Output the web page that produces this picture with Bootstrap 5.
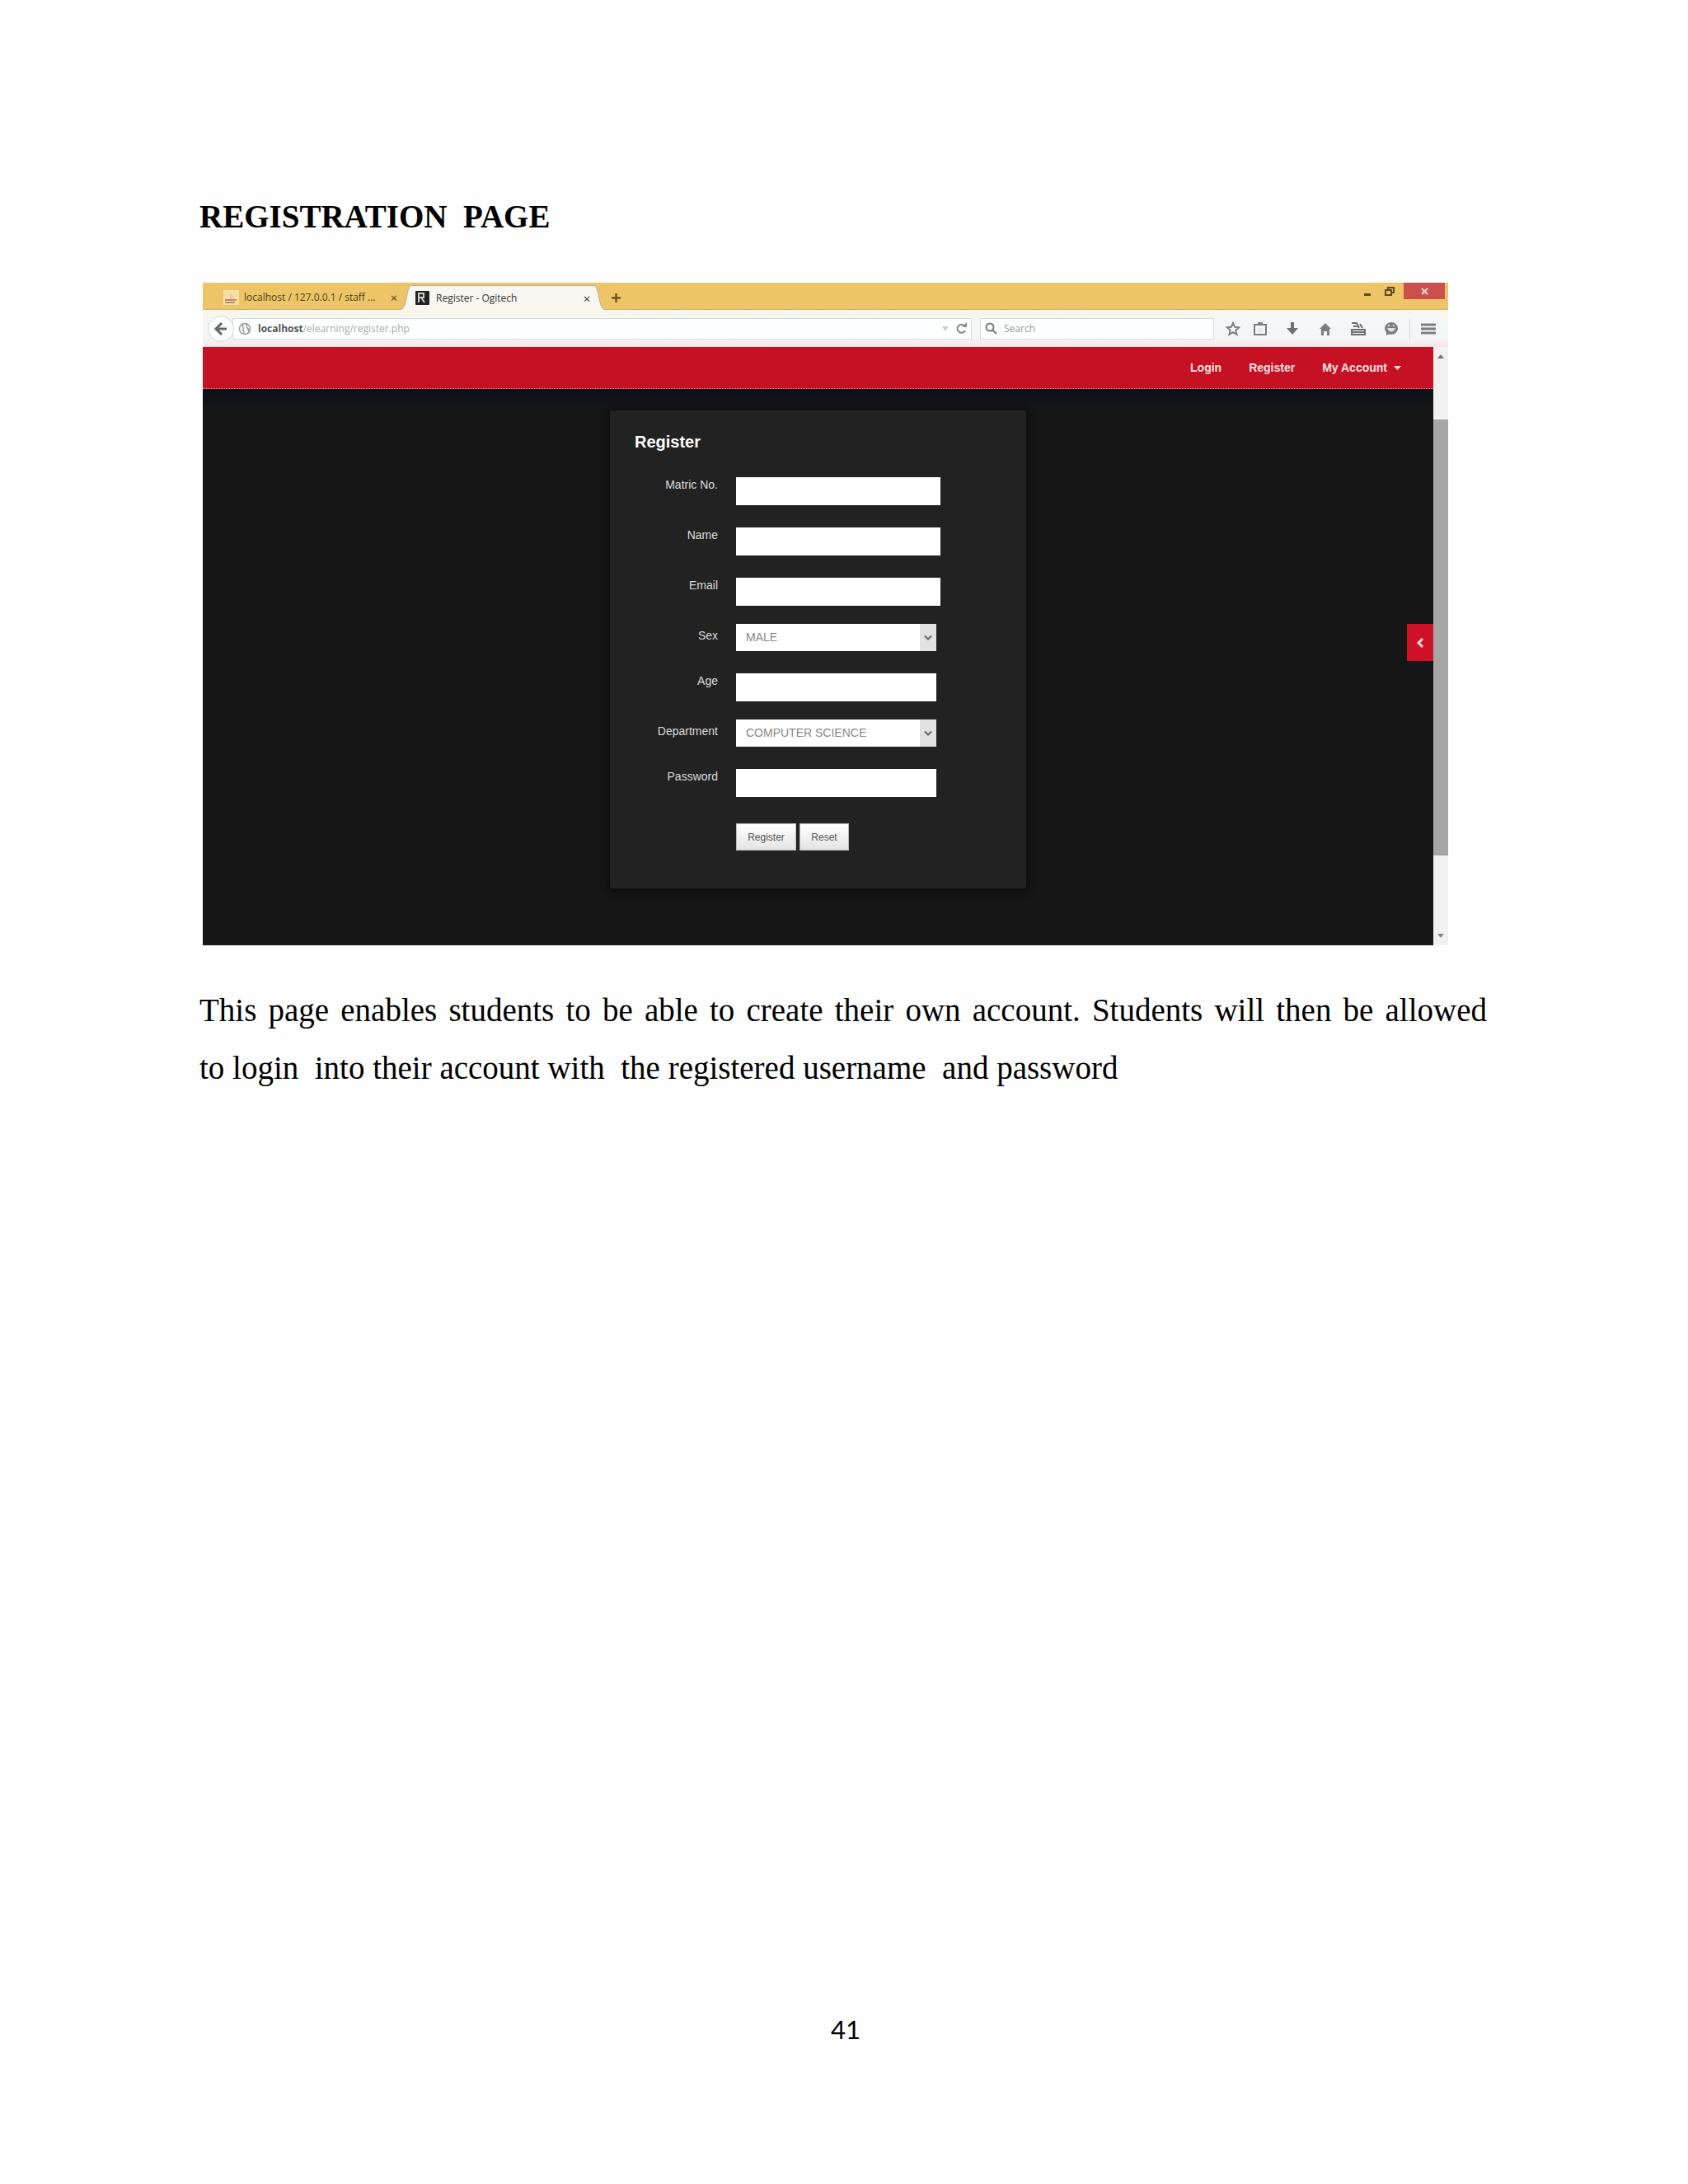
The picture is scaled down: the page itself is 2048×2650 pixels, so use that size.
<!DOCTYPE html>
<html lang="en">
<head>
<meta charset="utf-8">
<meta name="viewport" content="width=device-width, initial-scale=1">
<title>Registration Page</title>
<link rel="stylesheet" href="https://cdn.jsdelivr.net/npm/bootstrap@5.3.0/dist/css/bootstrap.min.css">
<style>
  body { background: #fefefe; color: #000; font-family: "Liberation Serif", serif; }
  .sheet { min-height: 100vh; padding: 228px 242px 164px; }
  .doc-title { font-size: 39px; line-height: 70px; margin: 0 0 45px; font-weight: 700; }
  .doc-text { font-size: 39px; line-height: 70px; margin: 44px 0 0; }
  .full-line { text-align: justify; text-align-last: justify; margin-right: 2px; }
  .page-no { font-family: Lato, sans-serif; font-size: 31px; line-height: 48px; padding-left: 4px; }
  .shot { margin: 0 49px 0 4px; font-family: "Liberation Sans", sans-serif; }

  /* browser chrome */
  .tabstrip { height: 33px; background: #edc566; border-bottom: 1px solid #c9b078; font-family: "Open Sans", sans-serif; font-size: 12px; line-height: 20px; color: #4b3d22; }
  .tab-idle { width: 240px; padding-left: 24px; }
  .tab-live { width: 248px; height: 30px; margin-bottom: -1px; }
  .tab-face { background: #f8f6f0; height: 30px; color: #333; border-top: 1px solid #b9ad8c; }
  .tab-x { border: 0; background: none; padding: 0; width: 16px; color: inherit; line-height: 20px; font-size: 15px; }
  .win-close { width: 50px; height: 20px; background: #c9504f; border: 0; padding: 0; color: #fff; }
  .win-btn { border: 0; background: none; padding: 0; height: 20px; width: 27px; }
  .toolbar { height: 45px; background: linear-gradient(#fbf5e4, #f4f7f7 25%, #f4f6f6 75%, #fbe3e8); padding: 0 14px 0 6px; font-family: "Open Sans", sans-serif; font-size: 12px; color: #555; }
  .back-btn { width: 32px; height: 32px; border: 1px solid #d3d9d6; background: #fbfdfc; padding: 0; z-index: 1; }
  .field-bar { height: 26px; background: #fdfefe; border: 1px solid #d5dcdf; }
  .address { margin-left: -2px; padding: 0 4px 0 6px; }
  .url { color: #aaa; }
  .url b { color: #555; }
  .finder { width: 284px; margin-left: 10px; padding-left: 5px; }
  .bare-input { border: 0; background: none; padding: 0; min-width: 0; font-size: 12px; color: #777; }
  .bare-input::placeholder { color: #999; opacity: 1; }
  .tool { border: 0; background: none; padding: 0; width: 20px; height: 20px; display: flex; }
  .tools-near { gap: 13px; margin: 0 19px 0 13px; }
  .tools-far { gap: 20px; }
  .tool-sep { width: 1px; height: 26px; background: #d4d8d8; margin: 0 12px; }

  /* site */
  .site { background: #161616; }
  .site-nav { height: 51px; background: #c61023; border-bottom: 1px dotted #e58f93; padding-right: 39px; gap: 33px; font-size: 14px; font-weight: 700; }
  .site-nav a { color: #fde3e3; text-decoration: none; }
  .stage { padding: 26px 0 69px; background: linear-gradient(#0b0f16, #161616 26px); }
  .panel { width: 505px; background: #222; padding: 23px 30px 46px; box-shadow: 0 2px 8px 2px #0c0c0c; border-radius: 3px; color: #ddd; }
  .panel-title { font-size: 20px; line-height: 30px; font-weight: 700; color: #fff; margin: 0 0 23px; }
  .line { display: flex; gap: 22px; margin-bottom: 22px; align-items: flex-start; }
  .line label { width: 101px; text-align: right; font-size: 14px; line-height: 20px; padding-top: 4px; }
  .box { height: 34px; width: 248px; margin-top: 5px; border: 0; border-radius: 0; background: #fff; }
  .box-short { width: 243px; }
  .pick { width: 243px; height: 33px; position: relative; }
  .pick select { appearance: none; background: #fff; width: 100%; height: 33px; border: 0; border-radius: 0; padding: 0 24px 0 12px; font-size: 14px; color: #888; }
  .pick svg { position: absolute; right: 0; top: 0; pointer-events: none; }
  .act { height: 33px; font-size: 12px; padding: 0; border: 1px solid #bbb; background: linear-gradient(#fff, #e4e4e4); color: #555; }
  .act-row { padding: 10px 0 0 123px; gap: 4px; }
  .act-a { width: 73px; }
  .act-b { width: 60px; }
  .drawer { right: 0; top: 336px; width: 32px; height: 45px; border: 0; background: #cf1029; padding: 0; }
  .scroller { width: 18px; background: #f1f1f1; padding: 8px 0; }
  .thumb { background: #a6a6a6; margin-top: 74px; flex: 0 0 529px; }
</style>
<script src="https://cdn.jsdelivr.net/npm/bootstrap@5.3.0/dist/js/bootstrap.bundle.min.js"></script>
</head>
<body>
<main class="sheet d-flex flex-column">
  <h1 class="doc-title">REGISTRATION&nbsp; PAGE</h1>

  <section class="shot" aria-label="Browser window">
    <div class="tabstrip d-flex align-items-end">
      <div class="tab-idle d-flex align-items-center pb-1">
        <svg width="22" height="20" viewBox="0 0 22 20"><rect x="1" y="1" width="19" height="18" fill="#f7dfa6"/><path d="M9 12V4l6 8z" fill="#f0c9a0"/><path d="M3 13h14M3 16h12" stroke="#b98d6a" stroke-width="2"/></svg>
        <span class="ms-1 text-nowrap">localhost / 127.0.0.1 / staff ...</span>
        <button class="tab-x ms-auto" aria-label="Close tab">×</button>
      </div>
      <div class="tab-live d-flex">
        <svg width="14" height="30" viewBox="0 0 14 30"><path d="M14 0C6 0 9 28 0 30H14z" fill="#f8f6f0"/><path d="M14 .5C6 .5 9 28 0 29.500" fill="none" stroke="#b9ad8c"/></svg>
        <div class="tab-face flex-grow-1 d-flex align-items-center">
          <svg class="ms-1" width="17" height="17" viewBox="0 0 17 17"><rect width="17" height="17" rx="1" fill="#222"/><path d="M4 14V3h6v5H7l4 6M4 8h4" fill="none" stroke="#ccc" stroke-width="2"/></svg>
          <span class="ms-2 text-nowrap">Register - Ogitech</span>
          <button class="tab-x ms-auto" aria-label="Close tab">×</button>
        </div>
        <svg width="14" height="30" viewBox="0 0 14 30"><path d="M0 0C8 0 5 28 14 30H0z" fill="#f8f6f0"/><path d="M0 .5C8 .5 5 28 14 29.500" fill="none" stroke="#b9ad8c"/></svg>
      </div>
      <button class="win-btn mb-1" aria-label="New tab"><svg width="11" height="11" viewBox="0 0 11 11"><path d="M5.500 0v11M0 5.500h11" stroke="#6b5527" stroke-width="2.500"/></svg></button>
      <div class="ms-auto me-1 align-self-start d-flex">
        <button class="win-btn" aria-label="Minimise"><svg width="12" height="12" viewBox="0 0 12 12"><path d="M2 9.500h8" stroke="#5e4a20" stroke-width="3"/></svg></button>
        <button class="win-btn" aria-label="Restore"><svg width="14" height="14" viewBox="0 0 14 14"><path d="M5 4V2h7v6h-2M2 5h7v6H2z" fill="none" stroke="#5e4a20" stroke-width="2"/></svg></button>
        <span class="ps-1"></span>
        <button class="win-close" aria-label="Close"><svg width="9" height="9" viewBox="0 0 9 9"><path d="M1 1l7 7M8 1L1 8" stroke="#f6d6d4" stroke-width="2"/></svg></button>
      </div>
    </div>

    <div class="toolbar d-flex align-items-center">
      <button class="back-btn rounded-circle" aria-label="Back"><svg width="18" height="18" viewBox="0 0 18 18"><path d="M16 9H4M10 2L3 9l7 7" fill="none" stroke="#666" stroke-width="3"/></svg></button>
      <div class="field-bar address flex-grow-1 d-flex align-items-center">
        <svg width="16" height="16" viewBox="0 0 16 16" fill="none" stroke="#999" stroke-width="1.500"><circle cx="8" cy="8" r="6.500"/><path d="M6 2c-2 3 1 4 0 6s2 3 1 5M9 2c3 2 0 4 2 5s2 2 1 4"/></svg>
        <span class="url flex-grow-1 ps-2 text-nowrap"><b>localhost</b>/elearning/register.php</span>
        <svg class="me-2" width="8" height="8" viewBox="0 0 8 8"><path d="M0 1h8L4 7z" fill="#ccd0d2"/></svg>
        <svg width="15" height="15" viewBox="0 0 15 15"><path d="M11 4a5 5 0 1 0 1 6" fill="none" stroke="#888" stroke-width="2"/><path d="M8 6h6V0z" fill="#888"/></svg>
      </div>
      <div class="field-bar finder d-flex align-items-center">
        <svg width="15" height="15" viewBox="0 0 15 15" fill="none" stroke="#777" stroke-width="2"><circle cx="6" cy="6" r="4.500"/><path d="M9 9l5 5"/></svg>
        <input class="bare-input flex-grow-1 ms-2" type="search" placeholder="Search" aria-label="Search">
      </div>
      <div class="tools-near d-flex">
        <button class="tool" aria-label="Bookmark"><svg width="20" height="20" viewBox="0 0 20 20"><path d="M10 3l2.200 4.800 5 .5-3.800 3.400 1.100 5-4.500-2.600-4.500 2.600 1.100-5-3.800-3.400 5-.5z" fill="none" stroke="#7a8082" stroke-width="2"/></svg></button>
        <button class="tool" aria-label="Bookmarks list"><svg width="20" height="20" viewBox="0 0 20 20"><path d="M3 5h14v12H3z" fill="none" stroke="#7a8082" stroke-width="2"/><path d="M7 2h6v4H7z" fill="#7a8082"/><path d="M7 10h6M7 13h6" stroke="#d5dadb" stroke-width="1"/></svg></button>
      </div>
      <div class="tools-far d-flex">
        <button class="tool" aria-label="Downloads"><svg width="20" height="20" viewBox="0 0 20 20"><path d="M8 2h4v7h5l-7 8-7-8h5z" fill="#6a7072"/></svg></button>
        <button class="tool" aria-label="Home"><svg width="20" height="20" viewBox="0 0 20 20"><path d="M10 3l7 7h-2v8h-3v-5H8v5H5v-8H3z" fill="#7a8082"/></svg></button>
        <button class="tool" aria-label="Translate"><svg width="20" height="20" viewBox="0 0 20 20" fill="none" stroke="#6a7072" stroke-width="2"><path d="M2 3h6l3 6M4 7h6M12 4l3 5"/><path d="M2 11h16v6H2zM2 14h16"/></svg></button>
        <button class="tool" aria-label="Chat"><svg width="20" height="20" viewBox="0 0 20 20"><ellipse cx="10" cy="9.500" rx="8" ry="7.500" fill="#7a8082"/><path d="M4 13v5l6-3z" fill="#7a8082"/><path d="M5 9c2 6 8 6 10 0z" fill="#dde1e1"/><path d="M7 5v2M13 5v2" stroke="#dde1e1" stroke-width="2"/></svg></button>
      </div>
      <div class="tool-sep"></div>
      <button class="tool" aria-label="Menu"><svg width="20" height="20" viewBox="0 0 20 20"><path d="M1 5h18M1 10h18M1 15h18" stroke="#7a8082" stroke-width="3"/></svg></button>
    </div>

    <div class="d-flex">
      <div class="site flex-grow-1 position-relative">
        <nav class="site-nav d-flex align-items-center justify-content-end">
          <a href="#login">Login</a>
          <a href="#register">Register</a>
          <a class="d-flex align-items-center gap-2" href="#account">My Account<svg width="9" height="5" viewBox="0 0 9 5"><path d="M0 0h9L4.500 5z" fill="#fde3e3"/></svg></a>
        </nav>
        <div class="stage">
          <form class="panel mx-auto" id="register">
            <h2 class="panel-title">Register</h2>
            <div class="line"><label for="matric">Matric No.</label><input class="box" id="matric" type="text"></div>
            <div class="line"><label for="fullname">Name</label><input class="box" id="fullname" type="text"></div>
            <div class="line"><label for="email">Email</label><input class="box" id="email" type="email"></div>
            <div class="line"><label for="sex">Sex</label>
              <div class="pick"><select id="sex"><option>MALE</option><option>FEMALE</option></select>
                <svg width="20" height="33" viewBox="0 0 20 33"><rect width="20" height="33" fill="#e2e2e2"/><path d="M6 14.500l4 4 4-4" fill="none" stroke="#666" stroke-width="2"/></svg></div></div>
            <div class="line"><label for="age">Age</label><input class="box box-short" id="age" type="text"></div>
            <div class="line"><label for="dept">Department</label>
              <div class="pick"><select id="dept"><option>COMPUTER SCIENCE</option></select>
                <svg width="20" height="33" viewBox="0 0 20 33"><rect width="20" height="33" fill="#e2e2e2"/><path d="M6 14.500l4 4 4-4" fill="none" stroke="#666" stroke-width="2"/></svg></div></div>
            <div class="line"><label for="pass">Password</label><input class="box box-short" id="pass" type="password"></div>
            <div class="act-row d-flex">
              <button class="act act-a" type="submit">Register</button>
              <button class="act act-b" type="reset">Reset</button>
            </div>
          </form>
        </div>
        <button class="drawer position-absolute" aria-label="Open side panel"><svg width="10" height="14" viewBox="0 0 10 14"><path d="M8 2L3 7l5 5" fill="none" stroke="#fbd9d9" stroke-width="3"/></svg></button>
      </div>
      <div class="scroller d-flex flex-column">
        <svg class="mx-auto flex-shrink-0" width="8" height="6" viewBox="0 0 8 6"><path d="M0 6l4-5 4 5z" fill="#777"/></svg>
        <div class="thumb"></div>
        <svg class="mx-auto mt-auto flex-shrink-0" width="8" height="6" viewBox="0 0 8 6"><path d="M0 0l4 5 4-5z" fill="#888"/></svg>
      </div>
    </div>
  </section>

  <p class="doc-text">
    <span class="d-block full-line">This page enables students to be able to create their own account. Students will then be allowed</span>
    to login&nbsp; into their account with&nbsp; the registered username&nbsp; and password
  </p>

  <footer class="page-no text-center mt-auto">41</footer>
</main>
</body>
</html>
